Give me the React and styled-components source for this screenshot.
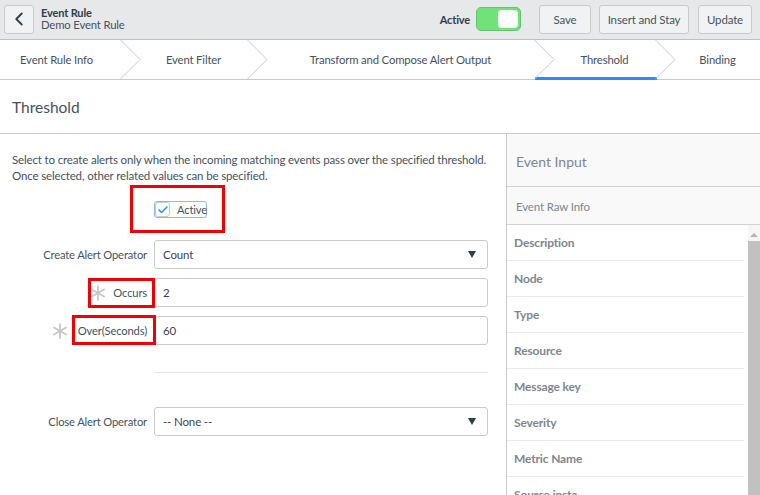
import React from "react";
import styled, { createGlobalStyle } from "styled-components";
import { Asterisk, Check, ChevronLeft } from "lucide-react";

const GlobalStyle = createGlobalStyle`
  html, body {
    margin: 0;
    padding: 0;
    background: #fff;
  }
  body {
    font-family: "Lato", "Liberation Sans", sans-serif;
    font-size: 12px;
    letter-spacing: -0.15px;
    color: #3b4550;
  }
  * {
    box-sizing: border-box;
  }
`;

const Page = styled.div`
  position: relative;
  width: 760px;
  height: 495px;
  overflow: hidden;
  background: #fff;
`;

const Header = styled.header`
  height: 40px;
  display: flex;
  align-items: center;
  padding: 0 8px 1px 4px;
  background: #e6e8ea;
  border-bottom: 1px solid #bdc0c4;
`;

const BackButton = styled.button`
  width: 30px;
  height: 29px;
  display: flex;
  align-items: center;
  justify-content: center;
  padding: 0;
  background: #f1f2f3;
  border: 1px solid #c8cbce;
  border-radius: 3px;
  color: #2e3d49;
`;

const TitleBlock = styled.div`
  margin-left: 7px;
  flex: 1;
  line-height: 12px;
  color: #2e3d49;
  b {
    display: block;
    font-weight: 700;
    font-size: 11px;
  }
  span {
    display: block;
    font-size: 11.3px;
    color: #46525e;
  }
`;

const ActiveLabel = styled.span`
  margin-right: 6px;
  font-weight: 700;
  font-size: 11px;
  color: #2e3d49;
`;

const Toggle = styled.div`
  width: 45px;
  height: 24px;
  margin-right: 18px;
  padding: 2px;
  display: flex;
  justify-content: flex-end;
  background: #71e279;
  border: 1px solid #63c56b;
  border-radius: 5px;
  i {
    display: block;
    width: 20px;
    height: 100%;
    background: #fff;
    border-radius: 4px;
  }
`;

const ActionButton = styled.button`
  height: 29px;
  width: ${(p) => p.$width}px;
  margin-left: ${(p) => p.$gap || 0}px;
  padding: 0;
  font: inherit;
  font-size: 11.5px;
  letter-spacing: -0.15px;
  color: #46525e;
  background: #f1f2f3;
  border: 1px solid #c8cbce;
  border-radius: 3px;
`;

const TabBar = styled.nav`
  height: 40px;
  display: flex;
  border-bottom: 1px solid #c8cacc;
`;

const Tab = styled.div`
  position: relative;
  width: ${(p) => p.$width}px;
  display: flex;
  align-items: center;
  justify-content: ${(p) => (p.$first ? "flex-start" : "center")};
  padding-left: 20px;
  font-size: 11.3px;
  color: #46525e;
  ${(p) =>
    p.$active &&
    `
    &::after {
      content: "";
      position: absolute;
      left: 1px;
      right: -2px;
      bottom: -1px;
      height: 3px;
      background: #278efc;
    }
  `}
`;

const Chevron = styled.svg`
  position: absolute;
  top: 0;
  right: -21px;
  width: 21px;
  height: 39px;
  z-index: 1;
`;

const PageTitle = styled.h1`
  height: 54px;
  margin: 0;
  padding: 0 0 0 12px;
  display: flex;
  align-items: center;
  font-size: 15.5px;
  font-weight: 400;
  letter-spacing: 0;
  color: #46525e;
  border-bottom: 1px solid #c8cacc;
`;

const Body = styled.div`
  display: flex;
  height: 361px;
`;

const FormArea = styled.section`
  width: 506px;
  padding: 18px 18px 0 12px;
`;

const Help = styled.p`
  margin: 0;
  font-size: 11.5px;
  line-height: 16px;
  white-space: nowrap;
  color: #46525e;
`;

const Row = styled.div`
  height: 29px;
  margin-top: ${(p) => p.$top}px;
  display: grid;
  grid-template-columns: 135px 334px;
  column-gap: 7px;
  align-items: center;
`;

const FieldLabel = styled.label`
  position: relative;
  text-align: right;
  font-size: 11.2px;
  color: #46525e;
`;

const Star = styled.span`
  position: absolute;
  top: 50%;
  right: ${(p) => p.$right}px;
  display: flex;
  transform: translateY(-50%);
  color: #c3c6ca;
`;

const CheckWrap = styled.div`
  grid-column: 2;
  display: flex;
  align-items: center;
  font-size: 11.2px;
  color: #46525e;
`;

const CheckFrame = styled.div`
  display: inline-flex;
  align-items: center;
  height: 17px;
  width: 53px;
  border: 1px solid #8db7f0;
  border-radius: 3px;
`;

const CheckBox = styled.span`
  flex: none;
  width: 15px;
  height: 15px;
  margin-right: 7px;
  display: flex;
  align-items: center;
  justify-content: center;
  border: 1px solid #c8cbce;
  border-radius: 3px;
  color: #278efc;
`;

const Field = styled.div`
  height: 29px;
  display: flex;
  align-items: center;
  justify-content: space-between;
  padding: 0 11px 0 8px;
  font-size: 11.5px;
  color: #3b4550;
  background: #fff;
  border: 1px solid #c8cbce;
  border-radius: 3px;
`;

const Caret = styled.i`
  width: 0;
  height: 0;
  border-left: 4px solid transparent;
  border-right: 4px solid transparent;
  border-top: 7px solid #2e3d49;
`;

const Divider = styled.hr`
  width: 334px;
  height: 1px;
  margin: 27px 0 34px 142px;
  border: 0;
  background: #e6e7e8;
`;

const RedBox = styled.div`
  position: absolute;
  top: ${(p) => p.$top}px;
  left: ${(p) => p.$left}px;
  width: ${(p) => p.$width}px;
  height: ${(p) => p.$height}px;
  border: 3px solid #f00000;
  z-index: 2;
  pointer-events: none;
`;

const Side = styled.aside`
  flex: 1;
  display: flex;
  flex-direction: column;
  border-left: 1px solid #c8cacc;
  min-width: 0;
`;

const SideTitle = styled.div`
  height: 53px;
  padding: 2px 0 0 9px;
  display: flex;
  align-items: center;
  font-size: 14px;
  letter-spacing: 0;
  color: #80868d;
  background: #f9f9f9;
  border-bottom: 1px solid #d0d2d4;
`;

const SideSub = styled.div`
  height: 38px;
  padding: 2px 0 0 9px;
  display: flex;
  align-items: center;
  font-size: 11.5px;
  color: #80868d;
  background: #f9f9f9;
  border-bottom: 1px solid #d0d2d4;
`;

const SideScroll = styled.div`
  flex: 1;
  display: flex;
  overflow: hidden;
`;

const FieldList = styled.ul`
  flex: 1;
  margin: 0;
  padding: 0;
  list-style: none;
`;

const FieldItem = styled.li`
  height: 36px;
  padding-left: 7px;
  display: flex;
  align-items: center;
  font-size: 12px;
  font-weight: 700;
  color: #80868d;
  border-bottom: 1px solid #e9eaeb;
`;

const Scrollbar = styled.div`
  width: 12px;
  margin-left: 4px;
  display: flex;
  flex-direction: column;
  align-items: center;
  background: #f6f6f6;
`;

const ScrollUp = styled.i`
  margin: 8px 0 4px;
  width: 0;
  height: 0;
  border-left: 4px solid transparent;
  border-right: 4px solid transparent;
  border-bottom: 4px solid #b4b4b4;
`;

const ScrollThumb = styled.div`
  flex: 1;
  width: 100%;
  background: #c1c1c1;
`;

const tabs = [
  { label: "Event Rule Info", width: 120, first: true },
  { label: "Event Filter", width: 127 },
  { label: "Transform and Compose Alert Output", width: 287 },
  { label: "Threshold", width: 121, active: true },
  { label: "Binding", width: 105, last: true },
];

const sideFields = [
  "Description",
  "Node",
  "Type",
  "Resource",
  "Message key",
  "Severity",
  "Metric Name",
  "Source insta",
];

const App = () => {
  return (
    <Page>
      <GlobalStyle />
      <Header>
        <BackButton aria-label="Back">
          <ChevronLeft size={22} strokeWidth={2} />
        </BackButton>
        <TitleBlock>
          <b>Event Rule</b>
          <span>Demo Event Rule</span>
        </TitleBlock>
        <ActiveLabel>Active</ActiveLabel>
        <Toggle>
          <i />
        </Toggle>
        <ActionButton $width={52}>Save</ActionButton>
        <ActionButton $width={90} $gap={8}>
          Insert and Stay
        </ActionButton>
        <ActionButton $width={54} $gap={9}>
          Update
        </ActionButton>
      </Header>

      <TabBar>
        {tabs.map((tab) => (
          <Tab
            key={tab.label}
            $width={tab.width}
            $first={tab.first}
            $active={tab.active}
          >
            {tab.label}
            {!tab.last && (
              <Chevron viewBox="0 0 21 39">
                <path d="M0.5 0 L20 19.5 L0.5 39" fill="none" stroke="#c8cacc" />
              </Chevron>
            )}
          </Tab>
        ))}
      </TabBar>

      <PageTitle>Threshold</PageTitle>

      <Body>
        <FormArea>
          <Help>
            Select to create alerts only when the incoming matching events pass
            over the specified threshold.
            <br />
            Once selected, other related values can be specified.
          </Help>

          <Row $top={11}>
            <CheckWrap>
              <CheckFrame>
                <CheckBox>
                  <Check size={12} strokeWidth={3} />
                </CheckBox>
                Active
              </CheckFrame>
            </CheckWrap>
          </Row>

          <Row $top={16}>
            <FieldLabel>Create Alert Operator</FieldLabel>
            <Field>
              Count
              <Caret />
            </Field>
          </Row>

          <Row $top={9}>
            <FieldLabel>
              <Star $right={35}>
                <Asterisk size={28} strokeWidth={1.5} />
              </Star>
              Occurs
            </FieldLabel>
            <Field>2</Field>
          </Row>

          <Row $top={9}>
            <FieldLabel>
              <Star $right={73}>
                <Asterisk size={28} strokeWidth={1.5} />
              </Star>
              Over(Seconds)
            </FieldLabel>
            <Field>60</Field>
          </Row>

          <Divider />

          <Row $top={0}>
            <FieldLabel>Close Alert Operator</FieldLabel>
            <Field>
              -- None --
              <Caret />
            </Field>
          </Row>
        </FormArea>

        <Side>
          <SideTitle>Event Input</SideTitle>
          <SideSub>Event Raw Info</SideSub>
          <SideScroll>
            <FieldList>
              {sideFields.map((name) => (
                <FieldItem key={name}>{name}</FieldItem>
              ))}
            </FieldList>
            <Scrollbar>
              <ScrollUp />
              <ScrollThumb />
            </Scrollbar>
          </SideScroll>
        </Side>
      </Body>

      <RedBox $top={185} $left={130} $width={95} $height={48} />
      <RedBox $top={278} $left={88} $width={67} $height={30} />
      <RedBox $top={315} $left={72} $width={84} $height={30} />
    </Page>
  );
};

export default App;
